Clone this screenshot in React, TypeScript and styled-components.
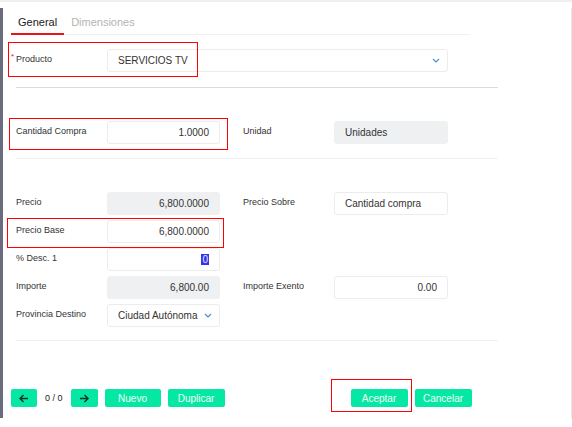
import React from 'react';
import styled, { createGlobalStyle } from 'styled-components';

const GlobalStyle = createGlobalStyle`
  html, body {
    margin: 0;
    padding: 0;
    background: #ffffff;
  }
  body {
    font-family: "Liberation Sans", Arial, sans-serif;
    color: #333333;
  }
`;

const Frame = styled.div`
  width: 572px;
  height: 427px;
  display: flex;
  flex-direction: column;
`;

const TopStrip = styled.div`
  height: 2px;
  background: #efefef;
  margin-bottom: 6px;
`;

const Panel = styled.div`
  height: 410px;
  border-left: 3px solid #686c7c;
  border-right: 1px solid #e6e6e6;
  display: flex;
  flex-direction: column;
`;

const TabBar = styled.div`
  display: flex;
  margin-left: 8px;
  width: 459px;
  border-bottom: 1px solid #f0f0f0;
`;

const Tab = styled.div<{ $active?: boolean }>`
  padding: 6px 7px 3px;
  font-size: 11px;
  line-height: 16px;
  color: ${(p) => (p.$active ? '#222222' : '#b4b4b4')};
  border-bottom: 2px solid ${(p) => (p.$active ? '#e8141c' : 'transparent')};
  margin-bottom: -1px;
`;

const Body = styled.div`
  padding-left: 13px;
  display: flex;
  flex-direction: column;
`;

const Separator = styled.div<{ $strong?: boolean }>`
  width: 482px;
  height: 1px;
  background: ${(p) => (p.$strong ? '#dcdcdc' : '#f0f0f0')};
`;

const Section = styled.div<{ $top: number; $bottom: number }>`
  display: flex;
  flex-direction: column;
  gap: 5px;
  margin-top: ${(p) => p.$top}px;
  margin-bottom: ${(p) => p.$bottom}px;
`;

const Row = styled.div<{ $wide?: boolean }>`
  position: relative;
  display: grid;
  grid-template-columns: ${(p) => (p.$wide ? '91px 341px' : '91px 113px 114px 114px')};
  align-items: start;
`;

const Label = styled.div<{ $side?: boolean }>`
  position: relative;
  font-size: 9px;
  line-height: 12px;
  padding-top: 4px;
  padding-left: ${(p) => (p.$side ? '23px' : '0')};
  color: #333333;
  white-space: nowrap;
`;

const Required = styled.span`
  position: absolute;
  left: -5px;
  top: 2px;
  color: #e8141c;
  font-size: 8px;
`;

const Field = styled.div<{ $right?: boolean; $readonly?: boolean }>`
  box-sizing: border-box;
  height: 23px;
  display: flex;
  align-items: center;
  justify-content: ${(p) => (p.$right ? 'flex-end' : 'flex-start')};
  padding: 0 10px;
  font-size: 10px;
  color: #333333;
  background: ${(p) => (p.$readonly ? '#eef0f2' : '#ffffff')};
  border: 1px solid ${(p) => (p.$readonly ? '#eef0f2' : '#ececec')};
  border-radius: 3px;
  white-space: nowrap;
  overflow: hidden;
`;

const Chevron = styled.svg`
  margin-left: auto;
  margin-right: -3px;
  flex: none;
`;

const Selected = styled.span`
  background: #3434f0;
  color: #e8e8ff;
  padding: 0 1px;
`;

const Highlight = styled.div<{ $left: number; $top: number; $w: number; $h: number }>`
  position: absolute;
  left: ${(p) => p.$left}px;
  top: ${(p) => p.$top}px;
  width: ${(p) => p.$w}px;
  height: ${(p) => p.$h}px;
  box-sizing: border-box;
  border: 1px solid #ff0000;
  pointer-events: none;
`;

const Footer = styled.div`
  display: flex;
  align-items: center;
  margin-top: 48px;
  padding-left: 8px;
`;

const Group = styled.div<{ $offset?: number }>`
  display: flex;
  align-items: center;
  gap: 7px;
  margin-left: ${(p) => p.$offset || 0}px;
`;

const Marked = styled.div`
  position: relative;
  display: flex;
`;

const Button = styled.button<{ $w: number }>`
  box-sizing: border-box;
  width: ${(p) => p.$w}px;
  height: 18px;
  padding: 0;
  border: none;
  border-radius: 2px;
  background: #05e8a3;
  color: #f4fffb;
  font-family: "Liberation Sans", Arial, sans-serif;
  font-size: 10px;
  display: flex;
  align-items: center;
  justify-content: center;
`;

const Counter = styled.span`
  font-size: 9px;
  color: #222222;
  padding: 0 1px;
`;

const ChevronDown = () => (
  <Chevron width="8" height="5" viewBox="0 0 8 5">
    <polyline points="1,1 4,4 7,1" fill="none" stroke="#4a8fdc" strokeWidth="1.2" />
  </Chevron>
);

const Arrow = ({ dir }: { dir: 'left' | 'right' }) => (
  <svg width="10" height="9" viewBox="0 0 10 9">
    {dir === 'left' ? (
      <path d="M9 4.5H1.5M4.5 1L1 4.5L4.5 8" fill="none" stroke="#0c3526" strokeWidth="1.5" />
    ) : (
      <path d="M1 4.5H8.5M5.5 1L9 4.5L5.5 8" fill="none" stroke="#0c3526" strokeWidth="1.5" />
    )}
  </svg>
);

export default function App() {
  return (
    <Frame>
      <GlobalStyle />
      <TopStrip />
      <Panel>
        <TabBar>
          <Tab $active>General</Tab>
          <Tab>Dimensiones</Tab>
        </TabBar>

        <Body>
          <Section $top={14} $bottom={15}>
            <Row $wide>
              <Label>
                <Required>*</Required>
                Producto
              </Label>
              <Field>
                SERVICIOS TV
                <ChevronDown />
              </Field>
              <Highlight $left={-8} $top={-7} $w={190} $h={35} />
            </Row>
          </Section>
          <Separator $strong />

          <Section $top={33} $bottom={14}>
            <Row>
              <Label>Cantidad Compra</Label>
              <Field $right>1.0000</Field>
              <Label $side>Unidad</Label>
              <Field $readonly>Unidades</Field>
              <Highlight $left={-7} $top={-3} $w={219} $h={32} />
            </Row>
          </Section>
          <Separator />

          <Section $top={33} $bottom={13}>
            <Row>
              <Label>Precio</Label>
              <Field $right $readonly>6,800.0000</Field>
              <Label $side>Precio Sobre</Label>
              <Field>Cantidad compra</Field>
            </Row>
            <Row>
              <Label>Precio Base</Label>
              <Field $right>6,800.0000</Field>
              <Highlight $left={-9} $top={-2} $w={217} $h={30} />
            </Row>
            <Row>
              <Label>% Desc. 1</Label>
              <Field $right>
                <Selected>0</Selected>
              </Field>
            </Row>
            <Row>
              <Label>Importe</Label>
              <Field $right $readonly>6,800.00</Field>
              <Label $side>Importe Exento</Label>
              <Field $right>0.00</Field>
            </Row>
            <Row>
              <Label>Provincia Destino</Label>
              <Field>
                Ciudad Autónoma
                <ChevronDown />
              </Field>
            </Row>
          </Section>
          <Separator />
        </Body>

        <Footer>
          <Group>
            <Button $w={26}>
              <Arrow dir="left" />
            </Button>
            <Counter>0 / 0</Counter>
            <Button $w={27}>
              <Arrow dir="right" />
            </Button>
            <Button $w={56}>Nuevo</Button>
            <Button $w={57}>Duplicar</Button>
          </Group>
          <Group $offset={126}>
            <Marked>
              <Button $w={57}>Aceptar</Button>
              <Highlight $left={-20} $top={-10} $w={81} $h={33} />
            </Marked>
            <Button $w={57}>Cancelar</Button>
          </Group>
        </Footer>
      </Panel>
    </Frame>
  );
}
